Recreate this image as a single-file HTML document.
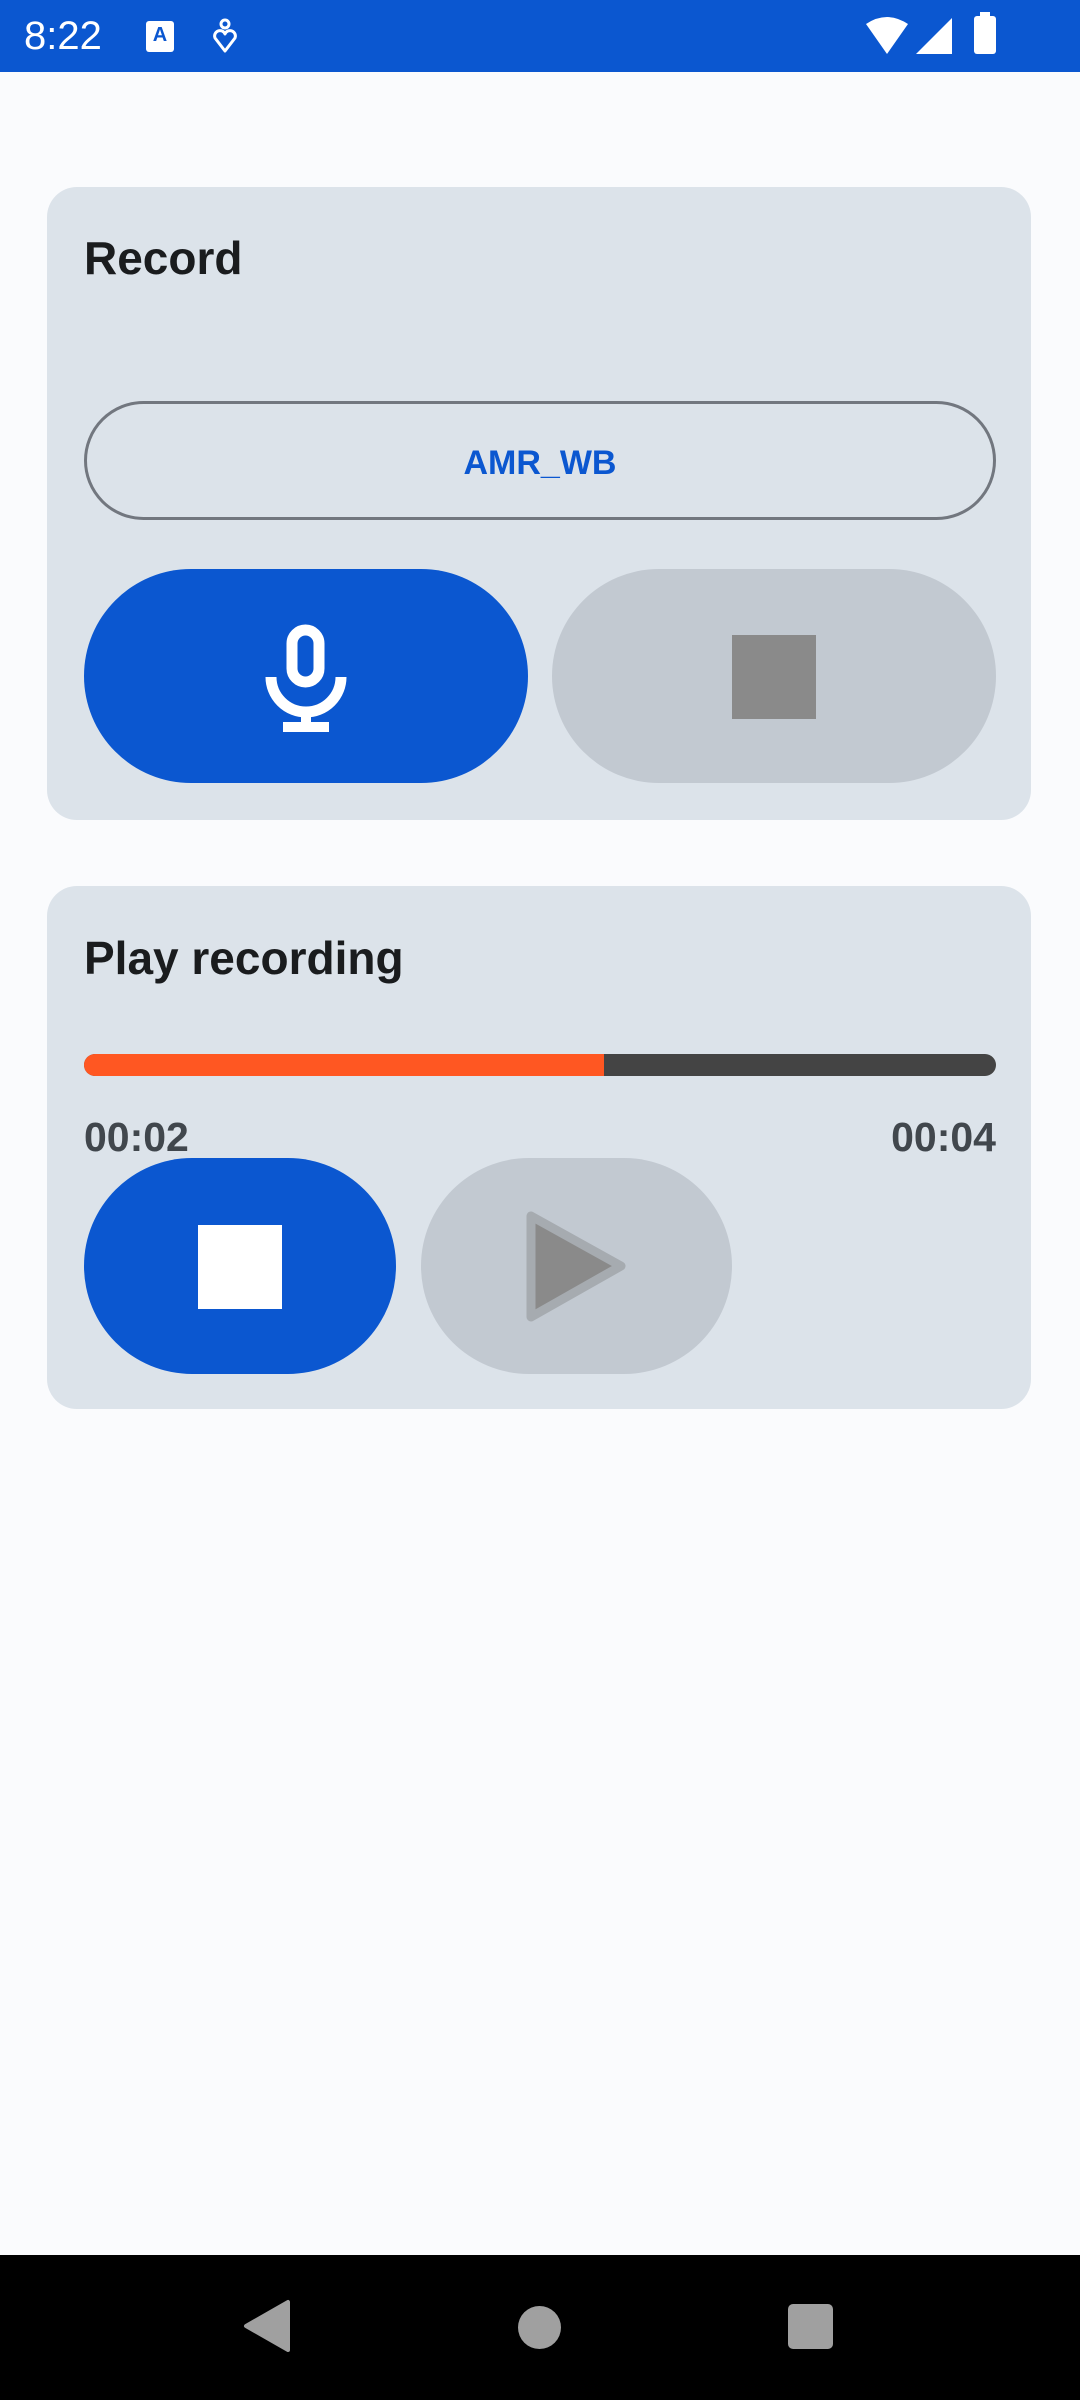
<!DOCTYPE html>
<html><head><meta charset="utf-8"><style>
*{margin:0;padding:0;box-sizing:border-box}
body{width:1080px;height:2400px;background:#fafbfd;position:relative;overflow:hidden;font-family:"Liberation Sans",sans-serif}
.abs{position:absolute}
.card{position:absolute;left:47px;width:984px;background:#dce3ea;border-radius:30px}
.title{position:absolute;left:84px;font-size:46px;font-weight:bold;color:#1a1c1e;line-height:1}
.pill{position:absolute;border-radius:108px}
</style></head><body>
<div class="abs" style="left:0;top:0;width:1080px;height:72px;background:#0b57d0"></div>
<div class="abs" style="left:24px;top:14px;font-size:40px;color:#fff;line-height:44px">8:22</div>
<div class="abs" style="left:146px;top:21px;width:28px;height:31px;background:#fff;border-radius:3px;color:#0b57d0;font-size:20px;font-weight:bold;text-align:center;line-height:28px">A</div>
<svg class="abs" style="left:210px;top:18px" width="30" height="36" viewBox="0 0 30 36"><circle cx="15" cy="6" r="4" fill="none" stroke="#fff" stroke-width="3"/><path d="M15 33 L5 20 A5 5 0 0 1 15 16 A5 5 0 0 1 25 20 Z" fill="none" stroke="#fff" stroke-width="3" stroke-linejoin="round"/></svg>
<svg class="abs" style="left:864px;top:16px" width="46" height="40" viewBox="0 0 46 40"><path d="M23 38 L2 8 Q23 -6 44 8 Z" fill="#fff"/></svg>
<svg class="abs" style="left:914px;top:16px" width="40" height="40" viewBox="0 0 40 40"><path d="M38 2 L38 38 L2 38 Z" fill="#fff"/></svg>
<div class="abs" style="left:974px;top:16px;width:22px;height:38px;background:#fff;border-radius:3px"></div>
<div class="abs" style="left:980px;top:12px;width:10px;height:6px;background:#fff"></div>

<div class="card" style="top:187px;height:633px"></div>
<div class="title" style="top:235px">Record</div>
<div class="pill" style="left:84px;top:401px;width:912px;height:119px;border:3px solid #72777f;color:#0b57d0;font-size:34px;font-weight:bold;text-align:center;line-height:119px">AMR_WB</div>
<div class="pill" style="left:84px;top:569px;width:444px;height:214px;background:#0b57d0"></div>
<svg class="abs" style="left:250px;top:600px" width="120" height="150" viewBox="250 600 120 150"><rect x="292" y="630" width="27" height="52" rx="13.5" fill="none" stroke="#fff" stroke-width="11"/><path d="M271 677 A35 35 0 0 0 341 677" fill="none" stroke="#fff" stroke-width="11"/><path d="M306 712 V727 M283 727 H329" stroke="#fff" stroke-width="10"/></svg>
<div class="pill" style="left:552px;top:569px;width:444px;height:214px;background:#c2c9d1"></div>
<div class="abs" style="left:732px;top:635px;width:84px;height:84px;background:#8a8a8a"></div>

<div class="card" style="top:886px;height:523px"></div>
<div class="title" style="top:935px">Play recording</div>
<div class="abs" style="left:84px;top:1054px;width:912px;height:22px;background:#444;border-radius:11px;overflow:hidden"><div style="width:520px;height:22px;background:#ff5722"></div></div>
<div class="abs" style="left:84px;top:1114px;font-size:41px;font-weight:bold;color:#41474d">00:02</div>
<div class="abs" style="right:84px;top:1114px;font-size:41px;font-weight:bold;color:#41474d">00:04</div>
<div class="pill" style="left:84px;top:1158px;width:312px;height:216px;background:#0b57d0"></div>
<div class="abs" style="left:198px;top:1225px;width:84px;height:84px;background:#fff"></div>
<div class="pill" style="left:421px;top:1158px;width:311px;height:216px;background:#c2c9d1"></div>
<svg class="abs" style="left:510px;top:1200px" width="130" height="130" viewBox="510 1200 130 130"><polygon points="531,1216 531,1317 621,1266" fill="#8a8a8a" stroke="#a6abb0" stroke-width="9" stroke-linejoin="round"/></svg>

<div class="abs" style="left:0;top:2255px;width:1080px;height:145px;background:#000"></div>
<svg class="abs" style="left:240px;top:2298px" width="54" height="56" viewBox="0 0 54 56"><path d="M48 4 V52 L6 28 Z" fill="#a0a0a0" stroke="#a0a0a0" stroke-width="4" stroke-linejoin="round"/></svg>
<div class="abs" style="left:518px;top:2306px;width:43px;height:43px;border-radius:50%;background:#a0a0a0"></div>
<div class="abs" style="left:788px;top:2304px;width:45px;height:45px;border-radius:5px;background:#a0a0a0"></div>
</body></html>
